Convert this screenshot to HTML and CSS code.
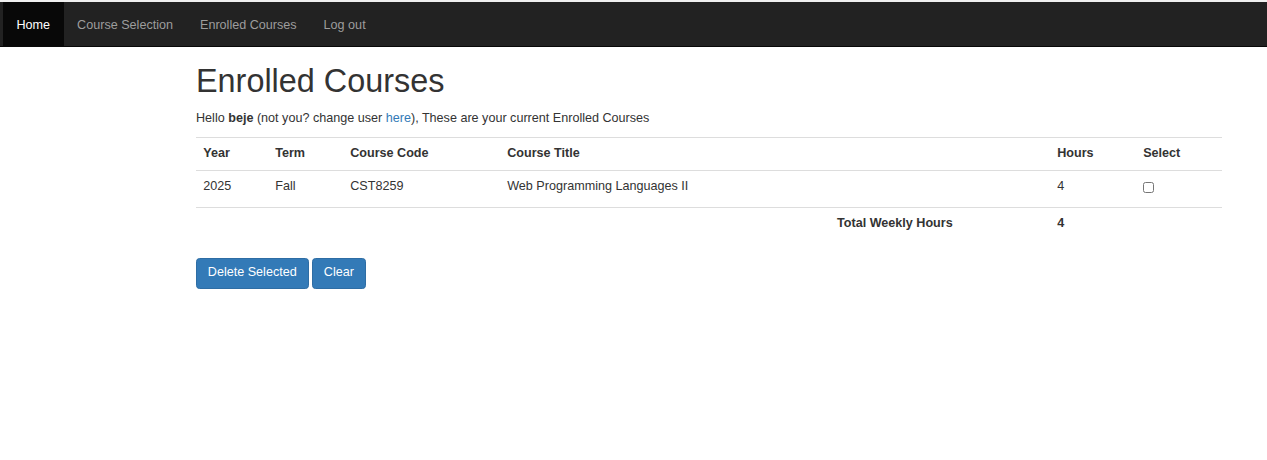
FILE: index.html
```html
<!DOCTYPE html>
<html>
<head>
<meta charset="utf-8">
<title>Enrolled Courses</title>
<link rel="stylesheet" href="styles.css">
</head>
<body>
<div class="topstrip"></div>
<nav class="navbar">
  <ul class="nav">
    <li class="active"><a href="#">Home</a></li>
    <li><a href="#">Course Selection</a></li>
    <li><a href="#">Enrolled Courses</a></li>
    <li><a href="#">Log out</a></li>
  </ul>
</nav>
<main class="container">
  <h1>Enrolled Courses</h1>
  <p class="intro">Hello <b>beje</b> (not you? change user <a href="#">here</a>), These are your current Enrolled Courses</p>
  <table class="table">
    <tr class="head">
      <th class="c-year">Year</th>
      <th class="c-term">Term</th>
      <th class="c-code">Course Code</th>
      <th class="c-title">Course Title</th>
      <th class="c-hours">Hours</th>
      <th class="c-select">Select</th>
    </tr>
    <tr class="row">
      <td>2025</td>
      <td>Fall</td>
      <td>CST8259</td>
      <td>Web Programming Languages II</td>
      <td>4</td>
      <td><input type="checkbox" class="check"></td>
    </tr>
    <tr class="total">
      <td></td>
      <td></td>
      <td></td>
      <th class="total-label">Total Weekly Hours</th>
      <th>4</th>
      <td></td>
    </tr>
  </table>
  <div class="actions">
    <button class="btn">Delete Selected</button>
    <button class="btn btn-clear">Clear</button>
  </div>
</main>
</body>
</html>
```
FILE: styles.css
```css
* { box-sizing: border-box; }
html, body {
  margin: 0;
  padding: 0;
  background: #fff;
}
body {
  font-family: "Liberation Sans", Arial, sans-serif;
  font-size: 12.6px;
  line-height: 18px;
  color: #333;
}
.topstrip {
  height: 2px;
  background: #f0f0f0;
}
.navbar {
  background: #222;
  border-bottom: 1px solid #080808;
  height: 45px;
  padding-left: 3px;
}
.nav {
  list-style: none;
  margin: 0;
  padding: 0;
  display: flex;
  height: 44px;
}
.nav li a {
  display: block;
  padding: 14px 13.5px 12px;
  line-height: 18px;
  color: #9d9d9d;
  text-decoration: none;
  height: 44px;
}
.nav li.active a {
  background: #080808;
  color: #fff;
}
.container {
  margin-left: 196px;
  width: 1026px;
}
h1 {
  font-size: 32.4px;
  font-weight: 500;
  line-height: 35.6px;
  margin: 17px 0 9px;
  color: #333;
}
.intro {
  margin: 0 0 10px;
}
.intro a {
  color: #337ab7;
  text-decoration: none;
}
.table {
  width: 100%;
  border-collapse: collapse;
  border-spacing: 0;
  margin-bottom: 18px;
}
.table th, .table td {
  text-align: left;
  vertical-align: top;
  padding: 7.2px;
  border-top: 1px solid #ddd;
  line-height: 18px;
}
.table th { font-weight: bold; }
.table .head th { padding-top: 6.2px; padding-bottom: 8.2px; }
.table .row td { padding-top: 6px; padding-bottom: 12px; }
.table .row td .check { margin-top: 5px; }
.table .total td, .table .total th { padding-top: 6.5px; }
.c-year { width: 72px; }
.c-term { width: 75px; }
.c-code { width: 157px; }
.c-title { width: 550px; }
.c-hours { width: 86px; }
.c-select { width: 86px; }
.table .total-label { padding-left: 337px; }
.check {
  width: 11px;
  height: 11px;
  margin: 3px 0 0;
  vertical-align: top;
}
.actions {
  display: flex;
  gap: 3px;
}
.btn {
  font-family: "Liberation Sans", Arial, sans-serif;
  font-size: 12.6px;
  line-height: 18px;
  color: #fff;
  background: #337ab7;
  border: 1px solid #2e6da4;
  border-radius: 3.6px;
  padding: 4.6px 10.8px 6.6px;
  height: 31px;
}
.btn-clear {
  padding-left: 11.3px;
  padding-right: 11.3px;
}
```
